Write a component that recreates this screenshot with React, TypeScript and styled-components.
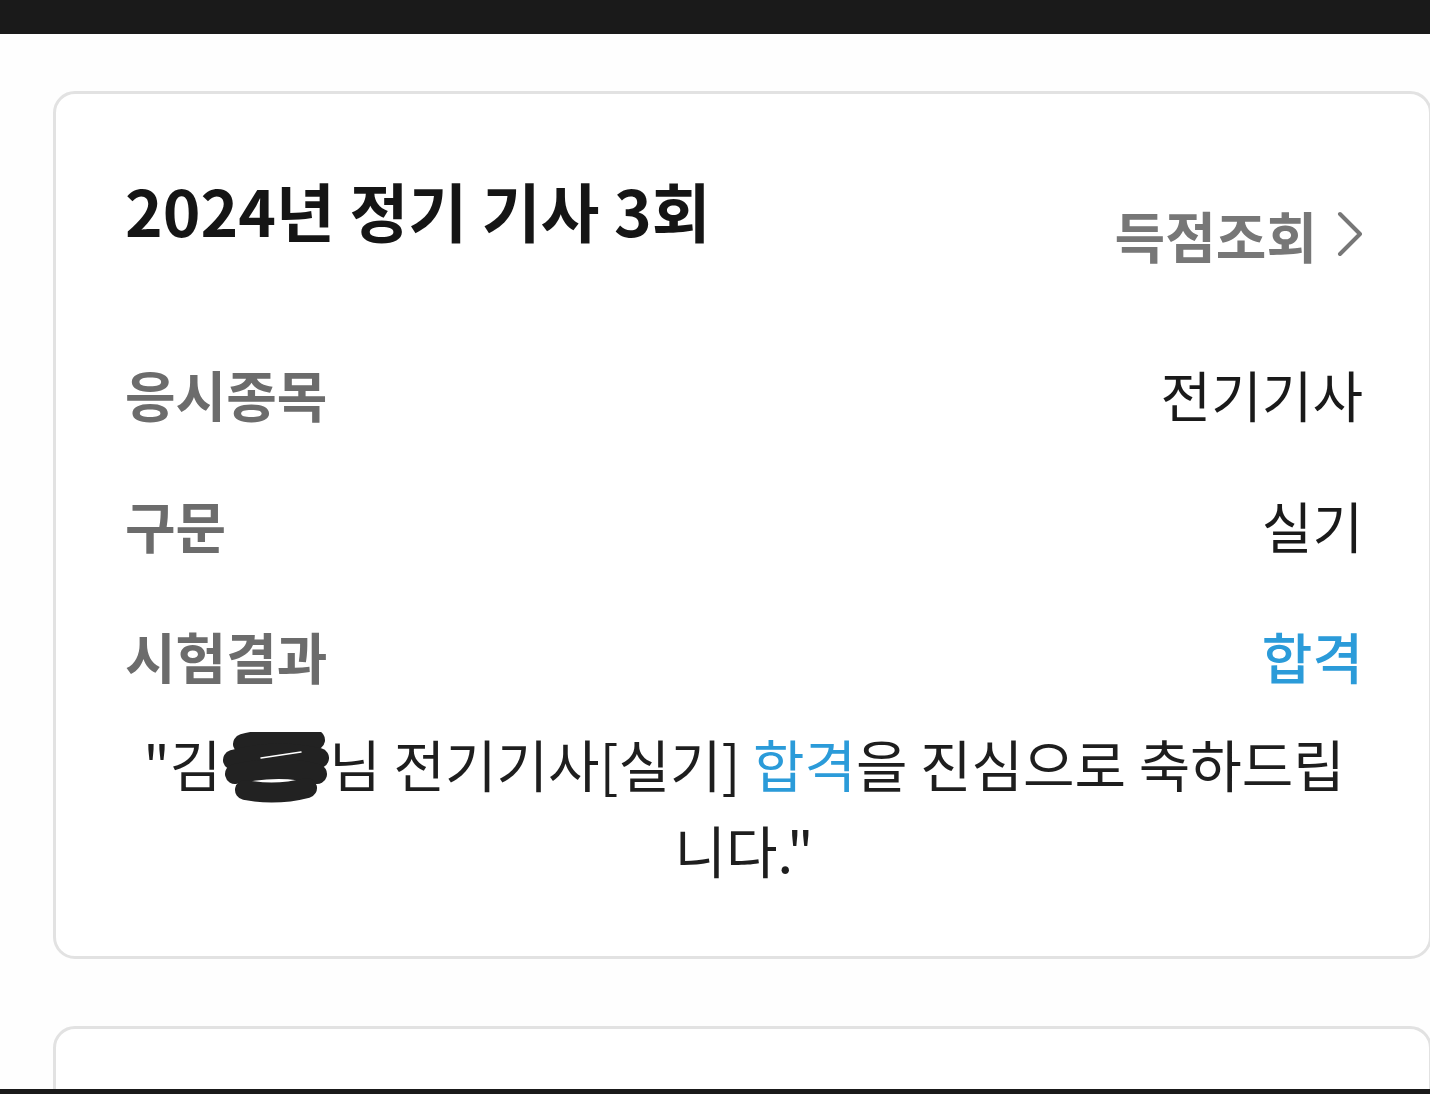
import styled, { createGlobalStyle } from "styled-components";

const GlobalStyle = createGlobalStyle`
  html, body {
    margin: 0;
    padding: 0;
    background: #fff;
  }
  body {
    font-family: "Noto Sans CJK KR", "Noto Sans", sans-serif;
  }
`

const Screen = styled.div`
  height: 1094px;
  display: flex;
  flex-direction: column;
  overflow: hidden;
  background: #fefefe;
`

const SystemBar = styled.div<{ $height: number }>`
  flex: 0 0 ${props => props.$height}px;
  background: #1a1a1a;
`

const Content = styled.div`
  flex: 1;
  overflow: hidden;
  display: flex;
  flex-direction: column;
  gap: 67px;
  padding: 57px 0 0 53px;
  margin-right: -2px;
`

const Card = styled.section`
  flex: 0 0 auto;
  box-sizing: border-box;
  border: 3px solid #e2e2e2;
  border-radius: 22px;
  background: #fff;
  padding: 75px 66px 64px 69px;
`

const EmptyCard = styled(Card)`
  height: 200px;
`

const Header = styled.div`
  display: flex;
  justify-content: space-between;
  align-items: flex-start;
  height: 158px;
`

const Title = styled.h2`
  margin: 0;
  font-size: 64px;
  line-height: 80px;
  font-weight: 700;
  color: #151515;
`

const ScoreLink = styled.a`
  margin-top: 29px;
  display: flex;
  align-items: center;
  gap: 20px;
  font-size: 55px;
  line-height: 72px;
  font-weight: 700;
  color: #777;
  text-decoration: none;
`

const Row = styled.div`
  display: flex;
  justify-content: space-between;
  align-items: center;
  height: 131px;
`

const Label = styled.span`
  font-size: 55px;
  font-weight: 700;
  color: #6c6c6c;
`

const Value = styled.span<{ $accent?: boolean }>`
  font-size: 55px;
  font-weight: ${props => (props.$accent ? 500 : 400)};
  color: ${props => (props.$accent ? "#2b9bd9" : "#1a1a1a")};
`

const Message = styled.p`
  margin: 0;
  padding: 0 12px;
  text-align: center;
  font-size: 56px;
  line-height: 86px;
  color: #1e1e1e;
`

const Accent = styled.span`
  color: #2b9bd9;
`

const Redacted = styled.span`
  position: relative;
  display: inline-block;
  width: 108px;
  color: transparent;

  svg {
    position: absolute;
    left: 0;
    top: 12px;
  }
`

function Chevron() {
  return (
    <svg width="26" height="46" viewBox="0 0 26 46" fill="none">
      <polyline points="3,3 23,23 3,43" stroke="#777" strokeWidth="4" strokeLinecap="round" strokeLinejoin="round" />
    </svg>
  )
}

function Scribble() {
  return (
    <svg width="108" height="72" viewBox="0 0 108 72" fill="none">
      <g stroke="#222" strokeWidth="20" strokeLinecap="round">
        <path d="M22 12 Q 60 2 94 8" />
        <path d="M12 28 Q 55 16 98 26" />
        <path d="M14 42 Q 60 32 96 42" />
        <path d="M24 58 Q 55 64 86 56" />
      </g>
      <path d="M40 26 L 80 20" stroke="#fff" strokeWidth="1.5" strokeLinecap="round" />
    </svg>
  )
}

export default function App() {
  return (
    <>
      <GlobalStyle />
      <Screen>
        <SystemBar $height={34} />
        <Content>
          <Card>
            <Header>
              <Title>2024년 정기 기사 3회</Title>
              <ScoreLink href="#">
                득점조회
                <Chevron />
              </ScoreLink>
            </Header>
            <Row>
              <Label>응시종목</Label>
              <Value>전기기사</Value>
            </Row>
            <Row>
              <Label>구문</Label>
              <Value>실기</Value>
            </Row>
            <Row>
              <Label>시험결과</Label>
              <Value $accent>합격</Value>
            </Row>
            <Message>
              "김<Redacted>○○<Scribble /></Redacted>님 전기기사[실기] <Accent>합격</Accent>을 진심으로 축하드립니다."
            </Message>
          </Card>
          <EmptyCard />
        </Content>
        <SystemBar $height={5} />
      </Screen>
    </>
  )
}
